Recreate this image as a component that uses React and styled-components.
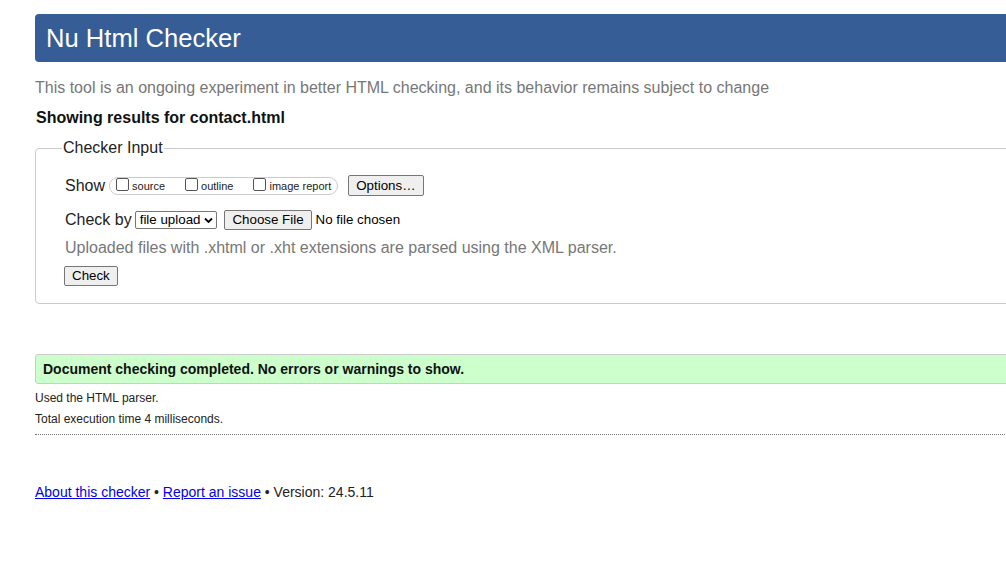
import React from "react";
import styled, { createGlobalStyle } from "styled-components";

const GlobalStyle = createGlobalStyle`
  html, body {
    margin: 0;
    padding: 0;
    background: #fff;
    overflow: hidden;
  }
  body {
    font-family: "Liberation Sans", Arial, sans-serif;
    color: #222;
  }
`;

const Page = styled.div`
  width: 1100px;
  padding: 14px 0 0 35px;
`;

const Header = styled.h1`
  margin: 0;
  height: 48px;
  display: flex;
  align-items: center;
  padding-left: 11px;
  background: #365d95;
  color: #fff;
  border-radius: 4px;
  font-size: 25.6px;
  font-weight: normal;
`;

const Subtitle = styled.p`
  margin: 17px 0 0;
  font-size: 16px;
  line-height: 18px;
  color: #777;
`;

const Showing = styled.h2`
  margin: 12px 0 0 1px;
  font-size: 16px;
  line-height: 18px;
  font-weight: bold;
  color: #111;
`;

const Fieldset = styled.fieldset`
  margin: 12px 0 0;
  padding: 0 0 17px 26px;
  border: 1px solid #ccc;
  border-radius: 4px;
  min-width: 0;
`;

const Legend = styled.legend`
  padding: 0 1px;
  font-size: 16px;
  line-height: 18px;
  color: #222;
`;

const Row = styled.div`
  display: flex;
  align-items: center;
  margin-left: 3px;
  margin-top: ${(p) => p.$top || 0}px;
  font-size: 16px;
  line-height: 18px;
`;

const Label = styled.span`
  margin-right: ${(p) => p.$gap || 4}px;
  color: #222;
`;

const CheckGroup = styled.span`
  display: inline-flex;
  align-items: center;
  height: 16px;
  padding: 0 6px;
  border: 1px solid #ccc;
  border-radius: 9px;
  gap: 20px;
  margin-right: 10px;
`;

const CheckItem = styled.label`
  display: inline-flex;
  align-items: center;
  font-size: 11px;
  color: #222;
`;

const Box = styled.span`
  width: 11px;
  height: 11px;
  border: 1px solid #555;
  border-radius: 2px;
  background: #fff;
  margin-right: 3px;
  margin-top: -2px;
`;

const Button = styled.button`
  font-family: "Liberation Sans", Arial, sans-serif;
  font-size: 13.33px;
  color: #000;
  background: #efefef;
  border: 1px solid #767676;
  border-radius: 2px;
  height: ${(p) => p.$h || 21}px;
  padding: 0 ${(p) => p.$px || 6}px;
  margin: ${(p) => p.$m || "0"};
  line-height: 1;
`;

const Select = styled.span`
  display: inline-flex;
  align-items: center;
  height: 16px;
  padding: 0 3px 0 4px;
  border: 1px solid #767676;
  border-radius: 2px;
  font-size: 13.33px;
  color: #000;
  margin-right: 7px;
  gap: 4px;
`;

const FileNote = styled.span`
  font-size: 13.33px;
  color: #000;
  margin-left: 4px;
`;

const Hint = styled.p`
  margin: 9px 0 0 3px;
  font-size: 16px;
  line-height: 18px;
  color: #777;
`;

const Success = styled.div`
  margin-top: 50px;
  height: 28px;
  display: flex;
  align-items: center;
  padding-left: 7px;
  background: #ccffcc;
  border: 1px solid #ccc;
  border-radius: 3px;
  font-size: 14px;
  font-weight: bold;
  color: #111;
`;

const Detail = styled.p`
  margin: ${(p) => p.$top}px 0 0;
  font-size: 12px;
  line-height: 14px;
  color: #222;
`;

const Dotted = styled.hr`
  margin: 8px 0 0;
  border: 0;
  border-top: 1px dotted #777;
`;

const Footer = styled.p`
  margin: 49px 0 0;
  font-size: 14px;
  line-height: 16px;
  color: #222;
  a {
    color: #0000ee;
    text-decoration: underline;
  }
`;

const Chevron = () => (
  <svg width="9" height="7" viewBox="0 0 9 7">
    <path d="M1 1.5 L4.5 5 L8 1.5" fill="none" stroke="#000" strokeWidth="1.8" />
  </svg>
);

export default function App() {
  return (
    <>
      <GlobalStyle />
      <Page>
        <Header>Nu Html Checker</Header>
        <Subtitle>
          This tool is an ongoing experiment in better HTML checking, and its
          behavior remains subject to change
        </Subtitle>
        <Showing>Showing results for contact.html</Showing>
        <Fieldset>
          <Legend>Checker Input</Legend>
          <Row $top={18}>
            <Label>Show</Label>
            <CheckGroup>
              <CheckItem>
                <Box />
                source
              </CheckItem>
              <CheckItem>
                <Box />
                outline
              </CheckItem>
              <CheckItem>
                <Box />
                image report
              </CheckItem>
            </CheckGroup>
            <Button $px={7}>Options…</Button>
          </Row>
          <Row $top={14}>
            <Label $gap={3}>Check by</Label>
            <Select>
              file upload <Chevron />
            </Select>
            <Button $h={20} $px={7}>Choose File</Button>
            <FileNote>No file chosen</FileNote>
          </Row>
          <Hint>
            Uploaded files with .xhtml or .xht extensions are parsed using the
            XML parser.
          </Hint>
          <Row $top={9}>
            <Button $h={20} $px={7} $m="0 0 0 -1px">
              Check
            </Button>
          </Row>
        </Fieldset>
        <Success>Document checking completed. No errors or warnings to show.</Success>
        <Detail $top={7}>Used the HTML parser.</Detail>
        <Detail $top={7}>Total execution time 4 milliseconds.</Detail>
        <Dotted />
        <Footer>
          <a href="#about">About this checker</a> •{" "}
          <a href="#report">Report an issue</a> • Version: 24.5.11
        </Footer>
      </Page>
    </>
  );
}
